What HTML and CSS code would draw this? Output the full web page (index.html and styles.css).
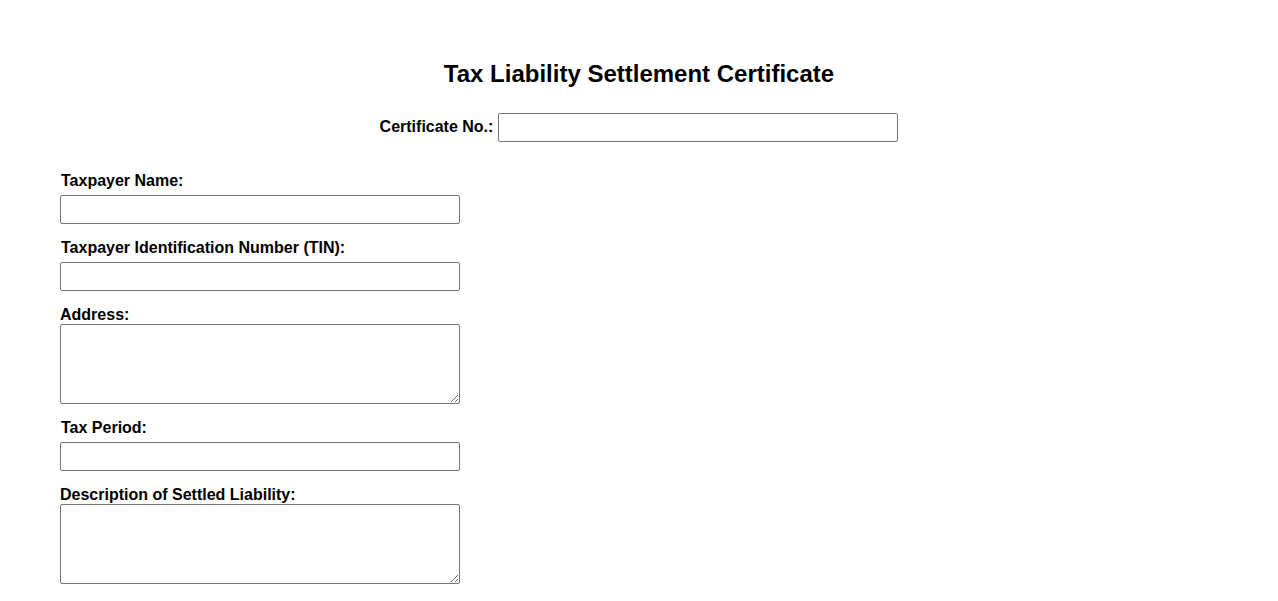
FILE: index.html
```html
<!DOCTYPE html>
<html lang="en">
<head>
<meta charset="utf-8">
<title>Tax Liability Settlement Certificate</title>
<link rel="stylesheet" href="styles.css">
</head>
<body>
<div class="page">
  <h1 class="title">Tax Liability Settlement Certificate</h1>
  <div class="cert-row">
    <label class="cert-label" for="cert">Certificate No.:</label>
    <input class="field-input cert-input" id="cert" type="text">
  </div>
  <form class="form">
    <div class="field">
      <label class="label label-input" for="name">Taxpayer Name:</label>
      <input class="field-input" id="name" type="text">
    </div>
    <div class="field">
      <label class="label label-input" for="tin">Taxpayer Identification Number (TIN):</label>
      <input class="field-input" id="tin" type="text">
    </div>
    <div class="field">
      <label class="label label-area" for="addr">Address:</label>
      <textarea class="field-area" id="addr"></textarea>
    </div>
    <div class="field">
      <label class="label label-input" for="period">Tax Period:</label>
      <input class="field-input" id="period" type="text">
    </div>
    <div class="field">
      <label class="label label-area" for="desc">Description of Settled Liability:</label>
      <textarea class="field-area" id="desc"></textarea>
    </div>
  </form>
</div>
</body>
</html>
```

FILE: styles.css
```css
html, body {
  margin: 0;
  padding: 0;
  background: #ffffff;
}

body {
  font-family: "Liberation Sans", Arial, sans-serif;
  color: #000000;
}

.page {
  padding: 60px 60px 0 60px;
}

.title {
  margin: 0;
  font-size: 24px;
  line-height: 28px;
  font-weight: bold;
  text-align: center;
}

.cert-row {
  display: flex;
  justify-content: center;
  align-items: center;
  gap: 5px;
  margin-top: 25px;
}

.cert-label {
  font-size: 16px;
  font-weight: bold;
  line-height: 18px;
  margin-bottom: 2px;
}

.field-input {
  box-sizing: border-box;
  width: 400px;
  height: 29px;
  border: 1px solid #767676;
  border-radius: 2px;
  padding: 1px 2px;
  margin: 0;
  font-family: "Liberation Sans", Arial, sans-serif;
  font-size: 13px;
  background: #ffffff;
}

.form {
  display: flex;
  flex-direction: column;
  gap: 14px;
  margin-top: 29px;
}

.field {
  display: flex;
  flex-direction: column;
  align-items: flex-start;
}

.label {
  font-size: 16px;
  font-weight: bold;
  line-height: 18px;
  margin-top: 1px;
}

.label-input {
  padding-left: 1px;
  margin-bottom: 5px;
}

.label-area {
  margin-bottom: 0;
}

.field-area {
  box-sizing: border-box;
  width: 400px;
  height: 80px;
  border: 1px solid #767676;
  border-radius: 2px;
  padding: 2px;
  margin: 0;
  font-family: "Liberation Mono", monospace;
  font-size: 13px;
  background: #ffffff;
}
```
